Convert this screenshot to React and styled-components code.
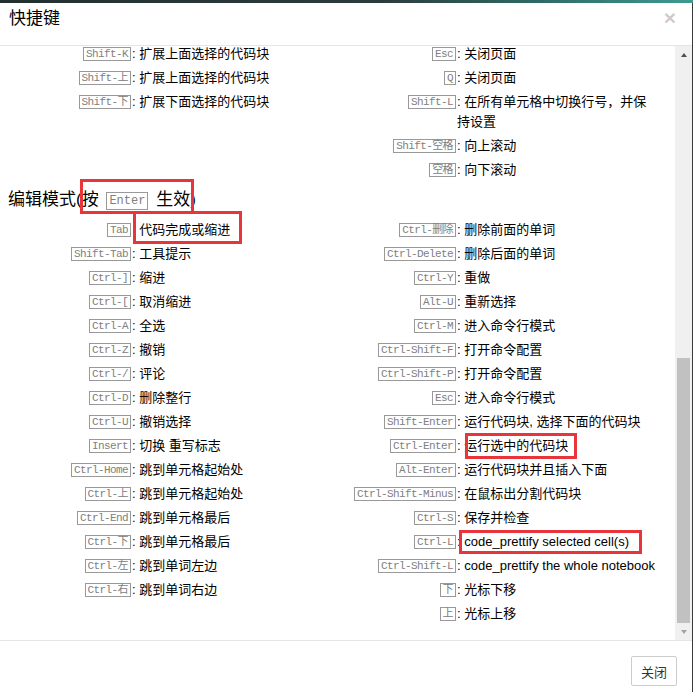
import React from "react";
import styled, { createGlobalStyle } from "styled-components";

const GlobalStyle = createGlobalStyle`
  html, body {
    margin: 0;
    padding: 0;
    background: #fff;
  }
`;

const Page = styled.div`
  position: relative;
  width: 693px;
  height: 692px;
  overflow: hidden;
  font-family: "Liberation Sans", "Noto Sans CJK SC", sans-serif;
  color: #000;
`;

const Backdrop = styled.div`
  height: 3px;
  background: linear-gradient(90deg, #22302f 0%, #2c3b3d 55%, #2f6f6a 80%, #3f9a90 100%);
`;

const Modal = styled.div`
  display: flex;
  flex-direction: column;
  height: 689px;
  border-right: 1px solid #3a3a3a;
  background: #fff;
`;

const Header = styled.div`
  display: flex;
  justify-content: space-between;
  align-items: flex-start;
  height: 43px;
  padding: 4px 16px 0 9px;
  box-sizing: border-box;
  border-bottom: 1px solid #e5e5e5;
  flex: 0 0 auto;
`;

const Title = styled.h4`
  margin: 0;
  font-size: 17px;
  font-weight: normal;
  line-height: 24px;
`;

const Close = styled.span`
  font-family: "Liberation Sans", sans-serif;
  font-size: 21px;
  font-weight: bold;
  line-height: 1;
  color: #000;
  opacity: 0.2;
`;

const Body = styled.div`
  display: flex;
  height: 594px;
  flex: 0 0 auto;
`;

const Content = styled.div`
  flex: 1;
  overflow: hidden;
  padding-left: 7px;
`;

const Shortcuts = styled.div`
  display: grid;
  grid-template-columns: 325px 325px;
  align-items: start;
  margin-top: ${(p) => p.$offset || 0}px;
`;

const Column = styled.div`
  display: flex;
  flex-direction: column;
`;

const Row = styled.div`
  display: flex;
  align-items: flex-start;
  padding: 2px 0;
  line-height: 20px;
`;

const KeyCell = styled.div`
  flex: 0 0 125px;
  display: flex;
  justify-content: flex-end;
  align-items: center;
  height: 20px;
`;

const Kbd = styled.kbd`
  display: inline-block;
  font-family: "Liberation Mono", "Noto Sans CJK SC", monospace;
  font-size: ${(p) => (p.$big ? 12 : 11)}px;
  letter-spacing: ${(p) => (p.$big ? 0 : -0.6)}px;
  line-height: ${(p) => (p.$big ? 16 : 12)}px;
  padding: 0 2px;
  margin: ${(p) => (p.$big ? "0 3px" : "0 1px 0 0")};
  border: 1px solid #999;
  color: #808080;
  background: #fff;
  vertical-align: middle;
`;

const Descr = styled.div`
  flex: 1;
  font-size: 13px;
`;

const SectionTitle = styled.h4`
  margin: 5px 0 5px 1px;
  font-size: 17px;
  font-weight: normal;
  line-height: 26px;
`;

const Scrollbar = styled.div`
  flex: 0 0 17px;
  display: flex;
  flex-direction: column;
  background: #f0f0f0;
`;

const ArrowButton = styled.div`
  height: 17px;
  flex: 0 0 17px;
  display: flex;
  align-items: center;
  justify-content: center;

  &::before {
    content: "";
    width: 0;
    height: 0;
    border-left: 3.5px solid transparent;
    border-right: 3.5px solid transparent;
    ${(p) =>
      p.$dir === "up"
        ? `border-bottom: 4px solid ${p.$muted ? "#a3a3a3" : "#505050"};`
        : `border-top: 4px solid ${p.$muted ? "#a3a3a3" : "#505050"};`}
  }
`;

const Track = styled.div`
  flex: 1;
  display: flex;
  flex-direction: column;
  justify-content: flex-end;
`;

const Thumb = styled.div`
  height: 265px;
  margin: 0 2px;
  background: #c1c1c1;
`;

const Footer = styled.div`
  display: flex;
  justify-content: flex-end;
  padding: 15px 15px 0 0;
  border-top: 1px solid #e5e5e5;
  flex: 1;
`;

const Button = styled.button`
  height: 30px;
  padding: 0 9px;
  font-family: "Liberation Sans", "Noto Sans CJK SC", sans-serif;
  font-size: 13px;
  color: #333;
  background: #fff;
  border: 1px solid #ccc;
  border-radius: 2px;
`;

const Mark = styled.div`
  position: absolute;
  box-sizing: border-box;
  border: 3px solid #e8353b;
  pointer-events: none;
`;

const commandLeft = [
  ["Shift-K", "扩展上面选择的代码块"],
  ["Shift-上", "扩展上面选择的代码块"],
  ["Shift-下", "扩展下面选择的代码块"],
];

const commandRight = [
  ["Esc", "关闭页面"],
  ["Q", "关闭页面"],
  ["Shift-L", "在所有单元格中切换行号，并保持设置"],
  ["Shift-空格", "向上滚动"],
  ["空格", "向下滚动"],
];

const editLeft = [
  ["Tab", "代码完成或缩进"],
  ["Shift-Tab", "工具提示"],
  ["Ctrl-]", "缩进"],
  ["Ctrl-[", "取消缩进"],
  ["Ctrl-A", "全选"],
  ["Ctrl-Z", "撤销"],
  ["Ctrl-/", "评论"],
  ["Ctrl-D", "删除整行"],
  ["Ctrl-U", "撤销选择"],
  ["Insert", "切换 重写标志"],
  ["Ctrl-Home", "跳到单元格起始处"],
  ["Ctrl-上", "跳到单元格起始处"],
  ["Ctrl-End", "跳到单元格最后"],
  ["Ctrl-下", "跳到单元格最后"],
  ["Ctrl-左", "跳到单词左边"],
  ["Ctrl-右", "跳到单词右边"],
];

const editRight = [
  ["Ctrl-删除", "删除前面的单词"],
  ["Ctrl-Delete", "删除后面的单词"],
  ["Ctrl-Y", "重做"],
  ["Alt-U", "重新选择"],
  ["Ctrl-M", "进入命令行模式"],
  ["Ctrl-Shift-F", "打开命令配置"],
  ["Ctrl-Shift-P", "打开命令配置"],
  ["Esc", "进入命令行模式"],
  ["Shift-Enter", "运行代码块, 选择下面的代码块"],
  ["Ctrl-Enter", "运行选中的代码块"],
  ["Alt-Enter", "运行代码块并且插入下面"],
  ["Ctrl-Shift-Minus", "在鼠标出分割代码块"],
  ["Ctrl-S", "保存并检查"],
  ["Ctrl-L", "code_prettify selected cell(s)"],
  ["Ctrl-Shift-L", "code_prettify the whole notebook"],
  ["下", "光标下移"],
  ["上", "光标上移"],
];

const ShortcutList = ({ items }) => (
  <Column>
    {items.map(([key, text], i) => (
      <Row key={i}>
        <KeyCell>
          <Kbd>{key}</Kbd>
        </KeyCell>
        <Descr>: {text}</Descr>
      </Row>
    ))}
  </Column>
);

export default function App() {
  return (
    <Page>
      <GlobalStyle />
      <Backdrop />
      <Modal>
        <Header>
          <Title>快捷键</Title>
          <Close>×</Close>
        </Header>
        <Body>
          <Content>
            <Shortcuts $offset={-4}>
              <ShortcutList items={commandLeft} />
              <ShortcutList items={commandRight} />
            </Shortcuts>
            <SectionTitle>
              编辑模式(按 <Kbd $big>Enter</Kbd> 生效)
            </SectionTitle>
            <Shortcuts>
              <ShortcutList items={editLeft} />
              <ShortcutList items={editRight} />
            </Shortcuts>
          </Content>
          <Scrollbar>
            <ArrowButton $dir="up" />
            <Track>
              <Thumb />
            </Track>
            <ArrowButton $dir="down" $muted />
          </Scrollbar>
        </Body>
        <Footer>
          <Button>关闭</Button>
        </Footer>
      </Modal>
      <Mark style={{ left: 80, top: 179, width: 114, height: 35 }} />
      <Mark style={{ left: 133, top: 211, width: 109, height: 33 }} />
      <Mark style={{ left: 465, top: 433, width: 112, height: 26 }} />
      <Mark style={{ left: 459, top: 530, width: 183, height: 24 }} />
    </Page>
  );
}
